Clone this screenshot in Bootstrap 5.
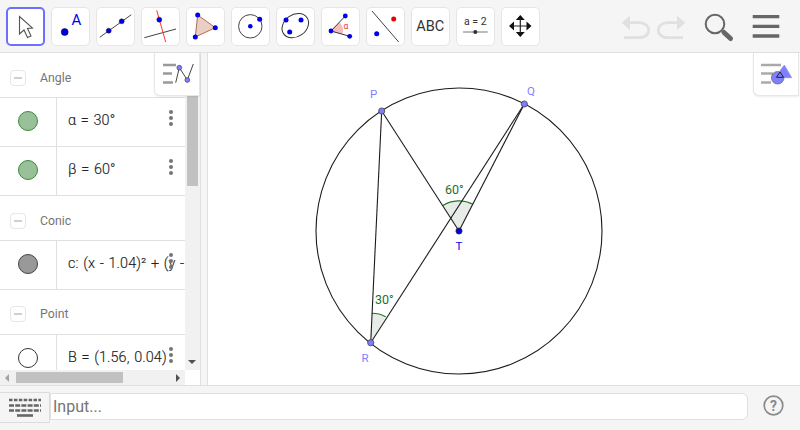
<!DOCTYPE html>
<html lang="en">
<head>
<meta charset="utf-8">
<title>Geometry</title>
<link href="https://cdn.jsdelivr.net/npm/bootstrap@5.3.0/dist/css/bootstrap.min.css" rel="stylesheet">
<style>
html,body{height:430px;overflow:hidden}
body{font-family:Roboto,"Liberation Sans",sans-serif;background:#fff;width:800px}
.app-shell{height:430px}
.tool-bar{height:53px;background:#f5f5f5;border-bottom:1px solid #e0e0e0;padding:7px 0 0 5.5px;flex:none}
.tool-btn.btn{width:39px;height:39px;padding:0;background:#fff;border:1px solid #e6e6e6;border-radius:5px;margin-right:6px;display:flex;align-items:center;justify-content:center;flex:none}
.tool-btn.btn.is-active{border:2px solid #6f6fff}
.tool-btn svg{display:block;flex:none}
.tool-end{margin-left:auto;margin-top:-7px}
.tool-end svg{display:block}
.main-area{height:332px;flex:none}
.left-pane{width:200px;flex:none}
.list-scroll{width:185px;height:317px;overflow:hidden;flex:none}
.group-head{height:44px;color:#757575;font-size:12.3px;padding:6px 0 0 10px;gap:14px}
.group-head.head-tight{padding-top:4px}
.minus-box{width:16px;height:16px;border:1px solid #e6e6e6;border-radius:4px;display:flex;align-items:center;justify-content:center}
.minus-box i{display:block;width:8px;height:2px;background:#d0d0d0}
.algebra-row{height:50px;border-top:1px solid #e0e0e0;border-bottom:1px solid #e0e0e0;position:relative}
.algebra-row + .algebra-row{border-top:0;height:49px}
.marble-cell{width:57px;flex:none;border-right:1px solid #e0e0e0;display:flex;align-items:center;justify-content:center;height:100%;padding-bottom:3px}
.marble{width:20px;height:20px;border-radius:50%;border:1px solid #000}
.marble.green{background:#99c199;border-color:#3c8a3c}
.marble.grey{background:#999;border-color:#444}
.marble.open{background:#fff;border-color:#333}
.math-cell{padding:0 0 3px 11px;font-size:14.4px;color:#222;white-space:nowrap;overflow:hidden;flex:1;font-weight:300;letter-spacing:.1px;word-spacing:1px;-webkit-text-stroke:.15px #222}
.kebab{position:absolute;left:169px;top:12px;width:4px;height:16px;display:flex;flex-direction:column;justify-content:space-between}
.kebab i{display:block;width:4px;height:4px;border-radius:50%;background:#757575}
.v-track{width:15px;height:317px;background:#f1f1f1;flex:none;padding:0 2px;position:relative}
.v-thumb{height:133px;background:#c1c1c1}
.arrow-down{position:absolute;left:3px;bottom:6px;width:0;height:0;border-left:4px solid transparent;border-right:4px solid transparent;border-top:4px solid #505050}
.h-track{height:15px;width:185px;background:#f1f1f1;display:flex;align-items:center;padding:0 4px}
.h-thumb{width:107px;height:11px;background:#c1c1c1;margin-left:11px;margin-right:auto}
.arrow-l{width:0;height:0;border-top:4px solid transparent;border-bottom:4px solid transparent;border-right:4px solid #a3a3a3;margin-left:1px;margin-right:-4px}
.arrow-r{width:0;height:0;border-top:4px solid transparent;border-bottom:4px solid transparent;border-left:4px solid #505050;margin-right:1px}
.splitter{width:8px;flex:none;background:#f5f5f5;border-left:1px solid #e0e0e0;border-right:1px solid #e0e0e0}
.canvas-pane{flex:1;min-width:0}
.canvas-pane svg{display:block}
.float-toggle{position:absolute;top:0;width:46px;height:43px;background:#fff;border-left:1px solid #e6e6e6;border-right:1px solid #e6e6e6;border-bottom:1px solid #e6e6e6;border-radius:0 0 0 6px;box-shadow:0 1px 2px rgba(0,0,0,.08);display:flex;align-items:center;justify-content:center}
.float-toggle svg{display:block;flex:none}
.float-alg{left:154px}
.float-geo{right:1px}
.input-bar{height:45px;flex:none;background:#f5f5f5;border-top:1px solid #e0e0e0;padding-top:6px;align-items:flex-start}
.kb-btn{width:50px;height:31px;background:#f5f5f5;border:1px solid #dcdcdc;border-left:0;display:flex;align-items:center;justify-content:center;flex:none}
.input-field.form-control{width:698px;height:27px;margin-top:1px;border:1px solid #e0e0e0;border-radius:0 6px 6px 0;padding:0 2px;font-size:16px;color:#555;box-shadow:none;flex:none}
.input-field.form-control::placeholder{color:#757575;opacity:1}
.help-wrap{width:50px;display:flex;justify-content:center;margin-top:3px}
</style>
</head>
<body>
<div class="app-shell d-flex flex-column">
  <div class="tool-bar d-flex align-items-start">
    <button class="btn tool-btn is-active" type="button"><svg width="39" height="39" viewBox="0 0 39 39"><path d="M13.500 9.500 L13.500 27 L18 23 L21.500 30.500 L25 29 L21.500 21.500 L26.500 21 Z" fill="#fff" stroke="#555" stroke-width="1.100"/></svg></button>
    <button class="btn tool-btn" type="button"><svg width="39" height="39" viewBox="0 0 39 39"><circle cx="13.700" cy="25" r="3.500" fill="#0000e6" stroke="#000" stroke-width=".5"/><text x="25.300" y="18.300" font-family="Roboto,sans-serif" font-size="15" fill="#0000e6" text-anchor="middle">A</text></svg></button>
    <button class="btn tool-btn" type="button"><svg width="39" height="39" viewBox="0 0 39 39"><path d="M3.700 30.300 L35.300 7.700" stroke="#444" stroke-width="1"/><circle cx="12.700" cy="23.700" r="2.500" fill="#0000e6" stroke="#222" stroke-width=".5"/><circle cx="25.700" cy="14.300" r="2.500" fill="#0000e6" stroke="#222" stroke-width=".5"/></svg></button>
    <button class="btn tool-btn" type="button"><svg width="39" height="39" viewBox="0 0 39 39"><path d="M3.300 30.700 L35 22" stroke="#444" stroke-width="1"/><path d="M15.700 3.300 L24.700 35" stroke="#f33" stroke-width="1"/><circle cx="18.300" cy="12.700" r="2.500" fill="#0000e6" stroke="#222" stroke-width=".5"/></svg></button>
    <button class="btn tool-btn" type="button"><svg width="39" height="39" viewBox="0 0 39 39"><path d="M11.700 8 L29.300 20.700 L9.300 30 Z" fill="#eccfc4" stroke="#b06a50" stroke-width="1"/><circle cx="11.700" cy="8" r="2.500" fill="#0000e6"/><circle cx="29.300" cy="20.700" r="2.500" fill="#0000e6"/><circle cx="9.300" cy="30" r="2.500" fill="#0000e6"/></svg></button>
    <button class="btn tool-btn" type="button"><svg width="39" height="39" viewBox="0 0 39 39"><circle cx="19.300" cy="19.300" r="11.700" fill="none" stroke="#444" stroke-width="1"/><circle cx="19.300" cy="19.300" r="2.300" fill="#0000e6"/><circle cx="28.700" cy="12.300" r="2.500" fill="#0000e6"/></svg></button>
    <button class="btn tool-btn" type="button"><svg width="39" height="39" viewBox="0 0 39 39"><ellipse cx="19.300" cy="18.700" rx="14.200" ry="11" transform="rotate(-35 19.300 18.700)" fill="none" stroke="#333" stroke-width="1"/><circle cx="10" cy="13" r="2.500" fill="#0000e6"/><circle cx="25" cy="13" r="2.500" fill="#0000e6"/><circle cx="13.700" cy="25" r="2.500" fill="#0000e6"/></svg></button>
    <button class="btn tool-btn" type="button"><svg width="39" height="39" viewBox="0 0 39 39"><path d="M10 24 L18.300 15.300 A12 12 0 0 1 21.600 27.300 Z" fill="#f7bcbc"/><path d="M10 24 L24.300 9 M10 24 L28.700 29.300" stroke="#333" stroke-width="1" fill="none"/><circle cx="10" cy="24" r="2.400" fill="#0000e6"/><circle cx="24.300" cy="9" r="2.400" fill="#0000e6"/><circle cx="28.700" cy="29.300" r="2.400" fill="#0000e6"/><text x="22.500" y="22" font-family="Roboto,sans-serif" font-size="8.500" fill="#e33">α</text></svg></button>
    <button class="btn tool-btn" type="button"><svg width="39" height="39" viewBox="0 0 39 39"><path d="M6 4 L32.700 35" stroke="#444" stroke-width="1"/><circle cx="27.700" cy="12" r="2.500" fill="#e60000"/><circle cx="10.700" cy="26.700" r="2.500" fill="#0000e6"/></svg></button>
    <button class="btn tool-btn" type="button"><svg width="39" height="39" viewBox="0 0 39 39"><text x="19.300" y="24.300" font-family="Roboto,sans-serif" font-size="14.500" fill="#333" text-anchor="middle">ABC</text></svg></button>
    <button class="btn tool-btn" type="button"><svg width="39" height="39" viewBox="0 0 39 39"><text x="19.300" y="18.300" font-family="Roboto,sans-serif" font-size="10.500" fill="#333" text-anchor="middle">a = 2</text><path d="M7 25 L31.700 25" stroke="#777" stroke-width="1"/><circle cx="19.300" cy="25" r="2.100" fill="#333"/></svg></button>
    <button class="btn tool-btn" type="button"><svg width="39" height="39" viewBox="0 0 39 39"><path d="M19.300 8 L23.800 13 L14.800 13 Z M19.300 30 L23.800 25 L14.800 25 Z M8 19 L13 14.500 L13 23.500 Z M30.500 19 L25.500 14.500 L25.500 23.500 Z" fill="#111"/><path d="M19.300 12 L19.300 26 M12 19 L26.500 19" stroke="#222" stroke-width="1.200"/></svg></button>
    <div class="tool-end">
      <svg width="190" height="52" viewBox="610 0 190 52">
        <g fill="none" stroke="#e0e0e0" stroke-width="2.700"><path d="M628 22.700 H639 C652 22.700 652 37.700 639 37.700 H624"/><path d="M679 22.700 H668 C655 22.700 655 37.700 668 37.700 H683"/></g>
        <path d="M621.700 22.700 L630 15.700 L630 30 Z M685.300 22.700 L677 15.700 L677 30 Z" fill="#e0e0e0"/>
        <circle cx="715" cy="24" r="9.300" fill="none" stroke="#666" stroke-width="2"/>
        <path d="M724 32.500 L730.500 38.500" stroke="#666" stroke-width="5" stroke-linecap="round"/>
        <path d="M752.700 16.700 H779.300 M752.700 26.400 H779.300 M752.700 36 H779.300" stroke="#666" stroke-width="3.300"/>
      </svg>
    </div>
  </div>

  <div class="main-area d-flex position-relative">
    <div class="left-pane d-flex flex-column">
      <div class="d-flex">
        <div class="list-scroll">
          <div class="group-head d-flex align-items-center"><span class="minus-box"><i></i></span><span>Angle</span></div>
          <div class="algebra-row d-flex align-items-center"><div class="marble-cell"><span class="marble green"></span></div><div class="math-cell">α = 30°</div><div class="kebab"><i></i><i></i><i></i></div></div>
          <div class="algebra-row d-flex align-items-center"><div class="marble-cell"><span class="marble green"></span></div><div class="math-cell">β = 60°</div><div class="kebab"><i></i><i></i><i></i></div></div>
          <div class="group-head d-flex align-items-center"><span class="minus-box"><i></i></span><span>Conic</span></div>
          <div class="algebra-row d-flex align-items-center"><div class="marble-cell"><span class="marble grey"></span></div><div class="math-cell">c: (x - 1.04)² + (y - 0.04)² = 4</div><div class="kebab"><i></i><i></i><i></i></div></div>
          <div class="group-head head-tight d-flex align-items-center"><span class="minus-box"><i></i></span><span>Point</span></div>
          <div class="algebra-row d-flex align-items-center"><div class="marble-cell"><span class="marble open"></span></div><div class="math-cell">B = (1.56, 0.04)</div><div class="kebab"><i></i><i></i><i></i></div></div>
        </div>
        <div class="v-track"><div class="v-thumb"></div><span class="arrow-down"></span></div>
      </div>
      <div class="h-track"><span class="arrow-l"></span><div class="h-thumb"></div><span class="arrow-r"></span></div>
    </div>
    <div class="splitter"></div>
    <div class="canvas-pane">
      <svg width="592" height="332" viewBox="208 53 592 332">
        <circle cx="459" cy="231" r="143" fill="none" stroke="#1c1c1c" stroke-width="1.100"/>
        <path d="M459 231 L442.800 205.500 A30.300 30.300 0 0 1 473 204.300 Z" fill="#e8ece8"/>
        <path d="M442.800 205.500 A30.300 30.300 0 0 1 473 204.300" fill="none" stroke="#1f7a1f" stroke-width="1.100"/>
        <path d="M370.700 342.700 L371.800 313.300 A30 30 0 0 1 385.800 316.700 Z" fill="#e8ece8"/>
        <path d="M371.800 313.300 A30 30 0 0 1 385.800 316.700" fill="none" stroke="#1f7a1f" stroke-width="1.100"/>
        <g stroke="#1c1c1c" stroke-width="1.100" fill="none">
          <path d="M381.700 111 L370.700 342.700"/><path d="M381.700 111 L459 231"/><path d="M524.300 104 L459 231"/><path d="M524.300 104 L370.700 342.700"/>
        </g>
        <circle cx="381.700" cy="111" r="3.100" fill="#7d7dff" stroke="#444" stroke-width=".8"/>
        <circle cx="524.300" cy="104" r="3.100" fill="#7d7dff" stroke="#444" stroke-width=".8"/>
        <circle cx="370.700" cy="342.700" r="3.100" fill="#7d7dff" stroke="#444" stroke-width=".8"/>
        <circle cx="459" cy="231" r="3.100" fill="#0000e6" stroke="#333" stroke-width=".8"/>
        <g font-family="Roboto,sans-serif" font-size="11.500">
          <text x="370" y="98" fill="#8080ff">P</text>
          <text x="527" y="95" fill="#8080ff">Q</text>
          <text x="361.500" y="362" fill="#8080ff">R</text>
          <text x="455.500" y="250" fill="#0000e6">T</text>
          <text x="445" y="194" font-size="12.500" fill="#1f6e1f">60°</text>
          <text x="375" y="303.500" font-size="12.500" fill="#1f6e1f">30°</text>
        </g>
      </svg>
    </div>
    <div class="float-toggle float-alg"><svg width="46" height="42" viewBox="154 53 46 42"><path d="M163 65 H176 M163 73.500 H172 M163 82.500 H173" stroke="#999" stroke-width="2.300"/><path d="M175.700 82.700 L179.300 67.700 L187.300 80 L193.300 64" fill="none" stroke="#444" stroke-width="1"/><circle cx="179.300" cy="67.700" r="2.400" fill="#7d7dff" stroke="#333" stroke-width=".6"/><circle cx="187.300" cy="80" r="2.400" fill="#7d7dff" stroke="#333" stroke-width=".6"/></svg></div>
    <div class="float-toggle float-geo"><svg width="46" height="42" viewBox="753 53 46 42"><path d="M761 65 H781 M761 73.500 H773 M761 82.500 H771" stroke="#aaa" stroke-width="2.300"/><circle cx="777.700" cy="77.700" r="6.300" fill="#8080ff" stroke="#666" stroke-width=".7"/><path d="M784.300 65 L791.700 77.700 L775 77.700 Z" fill="#8080ff" stroke="#8080ff" stroke-width=".6"/><path d="M780 72 L783.500 77.300 L776.500 77.300 Z" fill="none" stroke="#222" stroke-width="1"/></svg></div>
  </div>

  <div class="input-bar d-flex">
    <div class="kb-btn"><svg width="34" height="19" viewBox="0 0 34 19"><path d="M1 2 H33" stroke="#666" stroke-width="2.600" stroke-dasharray="3.500 1.400"/><path d="M1 7.500 H33 M1 12.500 H33" stroke="#666" stroke-width="2.600" stroke-dasharray="5 1.200"/><path d="M9 17.500 H25" stroke="#666" stroke-width="2.600"/></svg></div>
    <input class="form-control input-field" type="text" placeholder="Input..." aria-label="Input">
    <div class="help-wrap"><svg width="21" height="21" viewBox="0 0 21 21"><circle cx="10.500" cy="10.500" r="9.300" fill="none" stroke="#8a8a8a" stroke-width="1.700"/><text x="10.500" y="15.500" font-family="Roboto,sans-serif" font-size="14" font-weight="700" fill="#8a8a8a" text-anchor="middle">?</text></svg></div>
  </div>
</div>
<script src="https://cdn.jsdelivr.net/npm/bootstrap@5.3.0/dist/js/bootstrap.bundle.min.js"></script>
</body>
</html>
